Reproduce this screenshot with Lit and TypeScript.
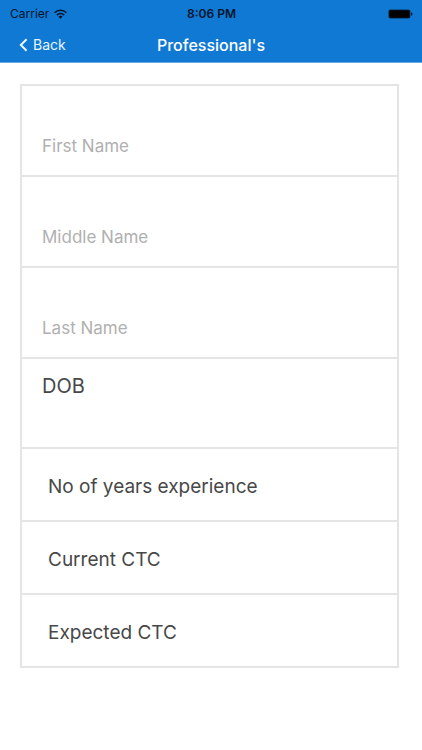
import { LitElement, html, css } from "lit";
import { customElement, property } from "lit/decorators.js";

@customElement("status-bar")
export class StatusBar extends LitElement {
  static styles = css`
    :host {
      display: grid;
      grid-template-columns: 1fr auto 1fr;
      align-items: center;
      height: 28px;
      padding: 0 9px 0 10px;
      color: #04152b;
      font-size: 12px;
      line-height: 16px;
    }
    .carrier {
      display: flex;
      align-items: center;
      gap: 5px;
    }
    .clock {
      font-weight: 600;
    }
    .battery {
      justify-self: end;
    }
    svg {
      display: block;
    }
  `;

  render() {
    return html`
      <div class="carrier">
        <span>Carrier</span>
        <svg width="13" height="10" viewBox="0 0 12 9" aria-hidden="true">
          <g fill="none" stroke="currentColor" stroke-width="1.5">
            <path d="M0.6 3.4 C3.6 0.3 8.4 0.3 11.4 3.4" />
            <path d="M2.6 5.5 C4.5 3.5 7.5 3.5 9.4 5.5" />
          </g>
          <path d="M6 8.9 L4.1 6.9 C5.1 6 6.9 6 7.9 6.9 Z" fill="currentColor" />
        </svg>
      </div>
      <time class="clock">8:06 PM</time>
      <svg class="battery" width="25" height="10" viewBox="0 0 25 10" aria-hidden="true">
        <rect x="0.4" y="0.4" width="22" height="9.2" rx="1.8" fill="#000" fill-opacity="0.6" />
        <rect x="1.2" y="1.2" width="20.4" height="7.6" rx="0.8" fill="#000" />
        <path d="M23.1 3.3 C24.9 3.8 24.9 6.2 23.1 6.7 Z" fill="#000" />
      </svg>
    `;
  }
}

@customElement("nav-bar")
export class NavBar extends LitElement {
  @property() heading = "";

  static styles = css`
    :host {
      display: grid;
      grid-template-columns: 1fr auto 1fr;
      align-items: center;
      height: 34px;
      padding: 0 19px;
      color: #fff;
    }
    .back {
      display: flex;
      align-items: center;
      justify-self: start;
      gap: 5px;
      margin: 0;
      padding: 0;
      border: 0;
      background: none;
      color: #e8f6ff;
      font: inherit;
      font-size: 14px;
      line-height: 20px;
      cursor: pointer;
    }
    h1 {
      margin: 0;
      font-size: 16px;
      font-weight: 500;
      line-height: 20px;
    }
  `;

  render() {
    return html`
      <button class="back" type="button">
        <svg width="9" height="14" viewBox="0 0 9 14" aria-hidden="true">
          <path d="M7.6 1.2 L1.8 7 L7.6 12.8" fill="none" stroke="currentColor" stroke-width="2" />
        </svg>
        Back
      </button>
      <h1>${this.heading}</h1>
    `;
  }
}

@customElement("app-root")
export class AppRoot extends LitElement {
  private names = ["First Name", "Middle Name", "Last Name"];

  private pickers = [
    { label: "No of years experience", options: ["0 - 2", "3 - 5", "6 - 10", "10+"] },
    { label: "Current CTC", options: ["0 - 5", "5 - 10", "10+"] },
    { label: "Expected CTC", options: ["0 - 5", "5 - 10", "10+"] },
  ];

  static styles = css`
    :host {
      display: block;
      min-height: 100vh;
      background: #fff;
      font-family: Inter, "Liberation Sans", sans-serif;
    }
    header {
      background: #1079d3;
      border-bottom: 1px solid #6aa9e0;
    }
    .form {
      margin: 21px 23px 24px 20px;
      border: 2px solid #e5e5e5;
      border-bottom: 0;
    }
    .row {
      box-sizing: border-box;
      display: block;
      width: 100%;
      margin: 0;
      border: 0;
      border-bottom: 2px solid #e5e5e5;
      border-radius: 0;
      outline-offset: -2px;
      background: none;
      color: #484848;
      font-family: inherit;
      line-height: 24px;
      text-align: left;
      appearance: none;
    }
    .name {
      height: 91px;
      padding: 30px 20px 0;
      font-size: 17px;
    }
    .name::placeholder {
      color: #b0b0b0;
      opacity: 1;
    }
    .date {
      height: 90px;
      padding: 0 20px 34px;
      font-size: 20px;
    }
    .picker {
      height: 73px;
      padding: 4px 26px 0;
      font-size: 19px;
    }
  `;

  render() {
    return html`
      <header>
        <status-bar></status-bar>
        <nav-bar heading="Professional's"></nav-bar>
      </header>
      <main>
        <form class="form">
          ${this.names.map(
            (name) => html`
              <input class="row name" type="text" placeholder=${name} aria-label=${name} />
            `
          )}
          <button class="row date" type="button">DOB</button>
          ${this.pickers.map(
            (picker) => html`
              <select class="row picker" aria-label=${picker.label}>
                <option value="" selected>${picker.label}</option>
                ${picker.options.map((option) => html`<option>${option}</option>`)}
              </select>
            `
          )}
        </form>
      </main>
    `;
  }
}
